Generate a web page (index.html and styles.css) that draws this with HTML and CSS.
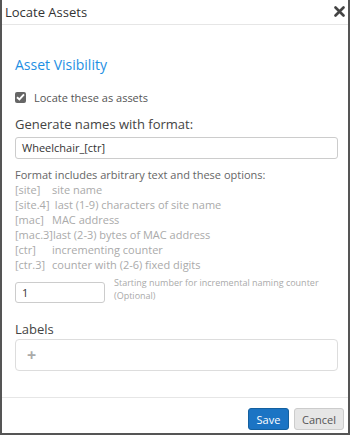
FILE: index.html
```html
<!DOCTYPE html>
<html lang="en">
<head>
    <meta charset="UTF-8">
    <meta name="viewport" content="width=device-width, initial-scale=1.0">
    <title>Locate Assets</title>
    <link rel="stylesheet" href="styles.css">
</head>
<body>
    <div class="dialog">
        <div class="dialog-header">
            <span class="dialog-title">Locate Assets</span>
            <span class="close-btn">
                <svg width="11" height="11" viewBox="0 0 11 11">
                    <path d="M1.5 1.5 L9.5 9.5 M9.5 1.5 L1.5 9.5" stroke="#444" stroke-width="2.6" stroke-linecap="round"/>
                </svg>
            </span>
        </div>

        <div class="dialog-body">
            <h3 class="section-title">Asset Visibility</h3>

            <label class="check-row">
                <span class="checkbox">
                    <svg width="9" height="8" viewBox="0 0 9 8">
                        <path d="M1 4.2 L3.4 6.5 L8 1.3" stroke="#fff" stroke-width="1.9" fill="none"/>
                    </svg>
                </span>
                Locate these as assets
            </label>

            <div class="field-label">Generate names with format:</div>
            <div class="text-input">Wheelchair_[ctr]</div>

            <p class="format-intro">Format includes arbitrary text and these options:</p>
            <ul class="options">
                <li><span class="key">[site]</span>site name</li>
                <li><span class="key">[site.4]</span> last (1-9) characters of site name</li>
                <li><span class="key">[mac]</span>MAC address</li>
                <li><span class="key">[mac.3]</span>last (2-3) bytes of MAC address</li>
                <li><span class="key">[ctr]</span>incrementing counter</li>
                <li><span class="key">[ctr.3]</span>counter with (2-6) fixed digits</li>
            </ul>

            <div class="counter-row">
                <div class="text-input counter-input">1</div>
                <div class="help-text">Starting number for incremental naming counter<br>(Optional)</div>
            </div>

            <div class="field-label labels-title">Labels</div>
            <div class="labels-box"><span class="plus">+</span></div>
        </div>

        <div class="dialog-footer">
            <button class="btn btn-primary">Save</button>
            <button class="btn btn-default">Cancel</button>
        </div>
    </div>
</body>
</html>
```

FILE: styles.css
```css
body {
    margin: 0;
    font-family: "Open Sans", Arial, sans-serif;
    background: #fff;
}
.dialog {
    box-sizing: border-box;
    width: 350px;
    height: 435px;
    border-left: 2px solid #555;
    border-right: 2px solid #555;
    border-bottom: 2px solid #555;
    background: #fff;
}
.dialog-header {
    display: flex;
    justify-content: space-between;
    align-items: center;
    height: 24px;
    padding: 0 3px 0 3px;
    border-bottom: 1px solid #e6e6e6;
}
.dialog-title {
    font-size: 13px;
    color: #333;
    line-height: 20px;
}
.close-btn {
    display: flex;
    margin-top: -2px;
}
.dialog-body {
    padding: 0 10px 0 13px;
}
.section-title {
    margin: 30px 0 0;
    font-size: 14px;
    font-weight: normal;
    line-height: 20px;
    color: #1e8fe3;
}
.check-row {
    display: flex;
    align-items: center;
    margin-top: 14px;
    height: 16px;
    font-size: 11px;
    color: #555;
}
.checkbox {
    display: flex;
    justify-content: center;
    align-items: center;
    width: 11px;
    height: 11px;
    margin-right: 8px;
    border-radius: 2px;
    background: #666;
}
.field-label {
    margin-top: 9px;
    font-size: 13px;
    line-height: 20px;
    color: #444;
}
.text-input {
    box-sizing: border-box;
    margin-top: 3px;
    height: 22px;
    padding: 0 6px;
    border: 1px solid #ccc;
    border-radius: 3px;
    font-size: 11px;
    line-height: 20px;
    color: #333;
}
.format-intro {
    margin: 8px 0 0;
    font-size: 11px;
    line-height: 15px;
    color: #666;
}
.options {
    list-style: none;
    margin: 0;
    padding: 0;
    font-size: 11px;
    line-height: 15px;
    color: #aaa;
}
.key {
    display: inline-block;
    min-width: 37px;
}
.counter-row {
    display: flex;
    align-items: flex-start;
    margin-top: 10px;
}
.counter-input {
    margin-top: 0;
    width: 90px;
    height: 21px;
    flex-shrink: 0;
}
.help-text {
    margin: -6px 0 0 9px;
    font-size: 9px;
    line-height: 13px;
    color: #aaa;
}
.labels-title {
    margin-top: 16px;
}
.labels-box {
    box-sizing: border-box;
    height: 32px;
    padding: 0 11px;
    border: 1px solid #ddd;
    border-radius: 4px;
    display: flex;
    align-items: center;
}
.plus {
    font-size: 16px;
    color: #aaa;
    font-weight: bold;
}
.dialog-footer {
    display: flex;
    justify-content: flex-end;
    gap: 5px;
    margin-top: 26px;
    padding: 10px 4px 0 0;
    border-top: 1px solid #e6e6e6;
}
.btn {
    box-sizing: border-box;
    height: 22px;
    padding: 0;
    font-family: "Open Sans", Arial, sans-serif;
    font-size: 11px;
    border-radius: 3px;
    cursor: pointer;
}
.btn-primary {
    width: 41px;
    color: #fff;
    background: #1b74c4;
    border: 1px solid #14609f;
}
.btn-default {
    width: 50px;
    color: #555;
    background: #e6e6e6;
    border: 1px solid #ccc;
}
```
